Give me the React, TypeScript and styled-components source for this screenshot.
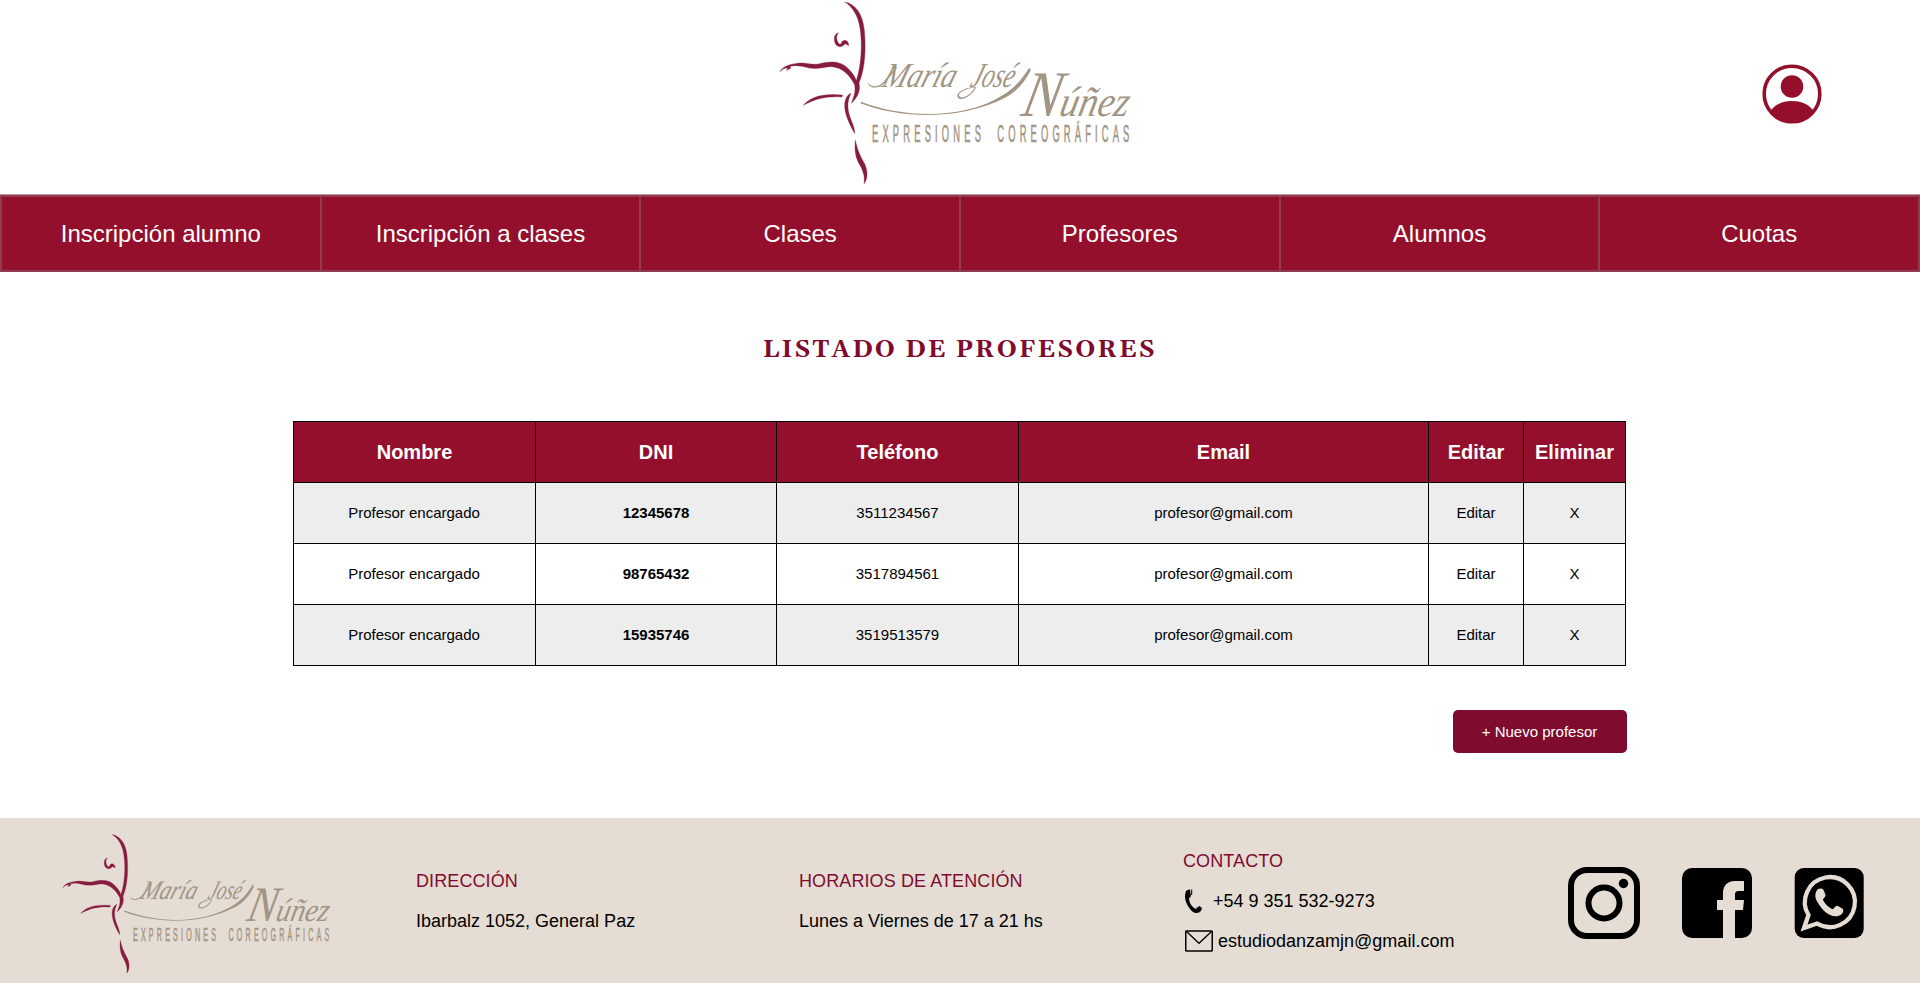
import React from "react";
import styled, { createGlobalStyle } from "styled-components";

const WINE = "#940f2b";
const DEEP = "#7f0c2f";
const TAUPE = "#a39584";

const GlobalStyle = createGlobalStyle`
  * { box-sizing: border-box; }
  body { margin: 0; background: #fff; color: #000; font-family: Arial, "Liberation Sans", sans-serif; }
`;

const Page = styled.div`
  display: flex;
  flex-direction: column;
  height: 983px;
  overflow: hidden;
`;

const Header = styled.header`
  display: grid;
  grid-template-columns: 1fr 354px 1fr;
  height: 194px;
  flex: none;
  padding-right: 98px;
  padding-left: 90px;
`;

const LogoSlot = styled.div`
  grid-column: 2;
`;

const LogoArt = styled.svg`
  display: block;
  overflow: visible;
`;

const Account = styled.div`
  display: flex;
  justify-content: flex-end;
  align-items: center;
  padding-bottom: 6px;
`;

const Nav = styled.nav`
  display: grid;
  grid-template-columns: repeat(6, 1fr);
  gap: 2px;
  flex: none;
  height: 78px;
  padding: 2px;
  border-top: 1px solid #c89aa6;
  background: #8f3b50;
`;

const NavItem = styled.a`
  display: flex;
  align-items: center;
  justify-content: center;
  background: ${WINE};
  color: #fff;
  font-size: 24px;
`;

const Main = styled.main`
  display: flex;
  flex-direction: column;
  align-items: flex-end;
  flex: none;
  height: 546px;
  padding: 62px 293.5px 0 293px;
`;

const Title = styled.h1`
  align-self: center;
  margin: 0 0 55px;
  color: ${DEEP};
  font: bold 24.5px/32px Georgia, Gelasio, "Liberation Serif", serif;
  letter-spacing: 2.1px;
`;

const Table = styled.table`
  width: 1333px;
  margin-right: auto;
  table-layout: fixed;
  border-collapse: collapse;
`;

const Row = styled.tr<{ $shaded?: boolean }>`
  height: 61px;
  background: ${(p) => (p.$shaded ? "#ededed" : "#fff")};
`;

const HeadCell = styled.th`
  padding: 0;
  border: 1px solid #000;
  background: ${WINE};
  color: #fff;
  font-size: 20px;
`;

const Cell = styled.td<{ $strong?: boolean }>`
  padding: 0 0 2px;
  border: 1px solid #000;
  text-align: center;
  font-size: 15px;
  font-weight: ${(p) => (p.$strong ? 700 : 400)};

  &:first-child {
    padding-right: 1px;
  }
`;

const NewButton = styled.button`
  width: 174px;
  height: 43px;
  margin-top: 44px;
  border: 0;
  border-radius: 5px;
  background: ${DEEP};
  color: #fff;
  font: 15px Arial, "Liberation Sans", sans-serif;
`;

const Footer = styled.footer`
  display: grid;
  grid-template-columns: 354px 383px 384px 385px 1fr;
  flex: 1;
  padding-left: 62px;
  background: #e5dcd3;
`;

const FooterLogo = styled.div`
  padding-top: 15px;
`;

const Info = styled.section<{ $top: number }>`
  display: flex;
  flex-direction: column;
  gap: 20px;
  padding-top: ${(p) => p.$top}px;
  font-size: 18px;
  line-height: 20px;
`;

const InfoTitle = styled.div`
  color: ${DEEP};
  letter-spacing: 0.1px;
`;

const ContactLine = styled.div<{ $gap: number }>`
  display: flex;
  align-items: center;
  gap: ${(p) => p.$gap}px;
  height: 20px;
  padding-left: 2px;
`;

const Social = styled.div`
  display: flex;
  gap: 42px;
  padding-top: 49px;
`;

function Logo({ width, height }: { width: number; height: number }) {
  return (
    <LogoArt width={width} height={height} viewBox="28 0 1062 560" preserveAspectRatio="none">
      <g fill="#861c3f" stroke="#861c3f" strokeWidth="1">
        <path d="M225 6C258 12 279 42 284 90C289 145 287 205 268 250C274 274 262 296 245 311C251 294 259 278 255 255C240 226 218 204 187 201C164 200 148 210 119 205C92 198 77 196 60 200L64 205L51 212L54 204L41 207L31 216C38 201 56 194 80 191C106 186 124 196 145 193C181 183 211 183 234 205C247 218 256 230 260 243C276 192 278 130 271 85C266 48 248 19 225 6Z" />
        <path d="M207 99C198 107 200 121 208 132C219 136 212 122 225 121C233 121 238 130 237 138L231 134C225 129 223 140 211 141C195 138 192 122 195 109C198 102 202 99 207 99Z" />
        <path d="M101 317C123 292 158 280 219 286L217 292C170 289 139 297 101 317Z" />
        <path d="M244 281C234 301 231 323 241 352C249 373 256 387 255 402C243 380 226 349 225 319C225 300 232 285 244 281Z" />
        <path d="M257 422C263 450 271 468 281 486C296 510 295 540 283 553C286 534 282 517 270 496C258 475 254 455 257 422Z" />
      </g>
      <path d="M274 306C394 352 575 365 700 286C730 268 752 246 779 203L783 212C760 256 735 278 710 292C570 365 392 357 272 311Z" fill={TAUPE} />
      <g fill={TAUPE} fontFamily="'Liberation Serif', serif" fontStyle="italic">
        <text transform="translate(333 261) skewX(-18)" fontSize="106" textLength="218" lengthAdjust="spacingAndGlyphs">María</text>
        <text transform="translate(598 261) skewX(-18)" fontSize="106" textLength="128" lengthAdjust="spacingAndGlyphs">José</text>
        <text transform="translate(750 348) skewX(-12)" fontSize="128" textLength="322" lengthAdjust="spacingAndGlyphs">
          <tspan fontSize="196">N</tspan>úñez
        </text>
      </g>
      <path d="M294 247C303 265 326 264 342 246L378 202L382 204L346 249C326 269 298 269 294 247Z" fill={TAUPE} />
      <path d="M622 262C600 259 563 272 563 289C564 306 602 299 619 263L616 262C600 293 570 300 568 287C568 275 599 264 622 262Z" fill={TAUPE} />
      <g fill={TAUPE} stroke={TAUPE} strokeWidth="2" fontFamily="'Liberation Sans', sans-serif" fontSize="74">
        <text transform="translate(307 427) scale(.38 1)" textLength="860" lengthAdjust="spacing">EXPRESIONES</text>
        <text transform="translate(683 427) scale(.38 1)" textLength="1042" lengthAdjust="spacing">COREOGRÁFICAS</text>
      </g>
    </LogoArt>
  );
}

const AccountIcon = () => (
  <svg width="60" height="60" viewBox="0 0 60 60">
    <circle cx="30" cy="30" r="27.8" fill="none" stroke={WINE} strokeWidth="3.6" />
    <circle cx="30" cy="22.5" r="11.3" fill={WINE} />
    <path d="M9 46C14 40 21 37 30 37s16 3 21 9c-5 8-13 13-21 13S14 54 9 46Z" fill={WINE} />
  </svg>
);

const PhoneIcon = () => (
  <svg width="18" height="25" viewBox="0 0 18 25">
    <path d="M1 2Q3 0 5 .5L6 7Q5 9 4 9C4 14 7 18 11 20L14 17Q17 18 17 20L15 23C11 25 8 24 5 20C0 14-1 7 1 2Z" />
    <path d="M6.7.5V6M11.5 18.5l3 3" stroke="#000" strokeWidth="1" />
  </svg>
);

const MailIcon = () => (
  <svg width="28" height="22" viewBox="0 0 28 22" fill="none" stroke="#000">
    <rect x="0.7" y="1" width="26.6" height="20" rx="1" strokeWidth="1.6" />
    <path d="M1.5 1.5L14 13.3L26.5 1.5" strokeWidth="1.3" />
  </svg>
);

const InstagramIcon = () => (
  <svg width="72" height="72" viewBox="0 0 72 72">
    <rect x="3" y="3" width="66" height="66" rx="16" fill="none" stroke="#000" strokeWidth="6" />
    <circle cx="36" cy="36" r="15.5" fill="none" stroke="#000" strokeWidth="6" />
    <circle cx="55.5" cy="16.5" r="4.7" />
  </svg>
);

const FacebookIcon = () => (
  <svg width="70" height="72" viewBox="0 0 70 72">
    <rect y="1" width="70" height="70" rx="10" />
    <path d="M41 71V43H35V33H41V26C41 18 46 14 53 14H62V24H57C54 24 53 25 53 28V33H62L61 43H53V71Z" fill="#e5dcd3" />
  </svg>
);

const WhatsappIcon = () => (
  <svg width="70" height="72" viewBox="0 0 70 72">
    <rect x=".7" y="1" width="69" height="70" rx="9" />
    <path d="M10 61L14.5 48A25 25 0 1 1 23 56.5Z" fill="none" stroke="#e5dcd3" strokeWidth="4.3" />
    <path d="M24 22C27 21 29 21 30 24L31.5 28C32 30 29 31 29 33C31 37 34 40 38 42C40 43 41 38 44 39L49 42C50 45 48 48 44 49C36 51 28 43 24 36C20 30 21 25 24 22Z" fill="#e5dcd3" />
  </svg>
);

const sections = ["Inscripción alumno", "Inscripción a clases", "Clases", "Profesores", "Alumnos", "Cuotas"];
const columns: [string, number][] = [
  ["Nombre", 242], ["DNI", 241], ["Teléfono", 242], ["Email", 410], ["Editar", 95], ["Eliminar", 102],
];
const teachers = [
  { dni: "12345678", phone: "3511234567" },
  { dni: "98765432", phone: "3517894561" },
  { dni: "15935746", phone: "3519513579" },
];

export default function App() {
  return (
    <Page>
      <GlobalStyle />
      <Header>
        <LogoSlot><Logo width={354} height={186} /></LogoSlot>
        <Account><AccountIcon /></Account>
      </Header>
      <Nav>{sections.map((s) => <NavItem key={s}>{s}</NavItem>)}</Nav>
      <Main>
        <Title>LISTADO DE PROFESORES</Title>
        <Table>
          <colgroup>{columns.map(([name, width]) => <col key={name} width={width} />)}</colgroup>
          <thead>
            <Row>{columns.map(([name]) => <HeadCell key={name}>{name}</HeadCell>)}</Row>
          </thead>
          <tbody>
            {teachers.map((t, i) => (
              <Row key={t.dni} $shaded={i % 2 === 0}>
                <Cell>Profesor encargado</Cell>
                <Cell $strong>{t.dni}</Cell>
                <Cell>{t.phone}</Cell>
                <Cell>profesor@gmail.com</Cell>
                <Cell>Editar</Cell>
                <Cell>X</Cell>
              </Row>
            ))}
          </tbody>
        </Table>
        <NewButton>+ Nuevo profesor</NewButton>
      </Main>
      <Footer>
        <FooterLogo><Logo width={270} height={142} /></FooterLogo>
        <Info $top={53}>
          <InfoTitle>DIRECCIÓN</InfoTitle>
          <div>Ibarbalz 1052, General Paz</div>
        </Info>
        <Info $top={53}>
          <InfoTitle>HORARIOS DE ATENCIÓN</InfoTitle>
          <div>Lunes a Viernes de 17 a 21 hs</div>
        </Info>
        <Info $top={33}>
          <InfoTitle>CONTACTO</InfoTitle>
          <ContactLine $gap={10}><PhoneIcon /><span>+54 9 351 532-9273</span></ContactLine>
          <ContactLine $gap={5}><MailIcon /><span>estudiodanzamjn@gmail.com</span></ContactLine>
        </Info>
        <Social><InstagramIcon /><FacebookIcon /><WhatsappIcon /></Social>
      </Footer>
    </Page>
  );
}
